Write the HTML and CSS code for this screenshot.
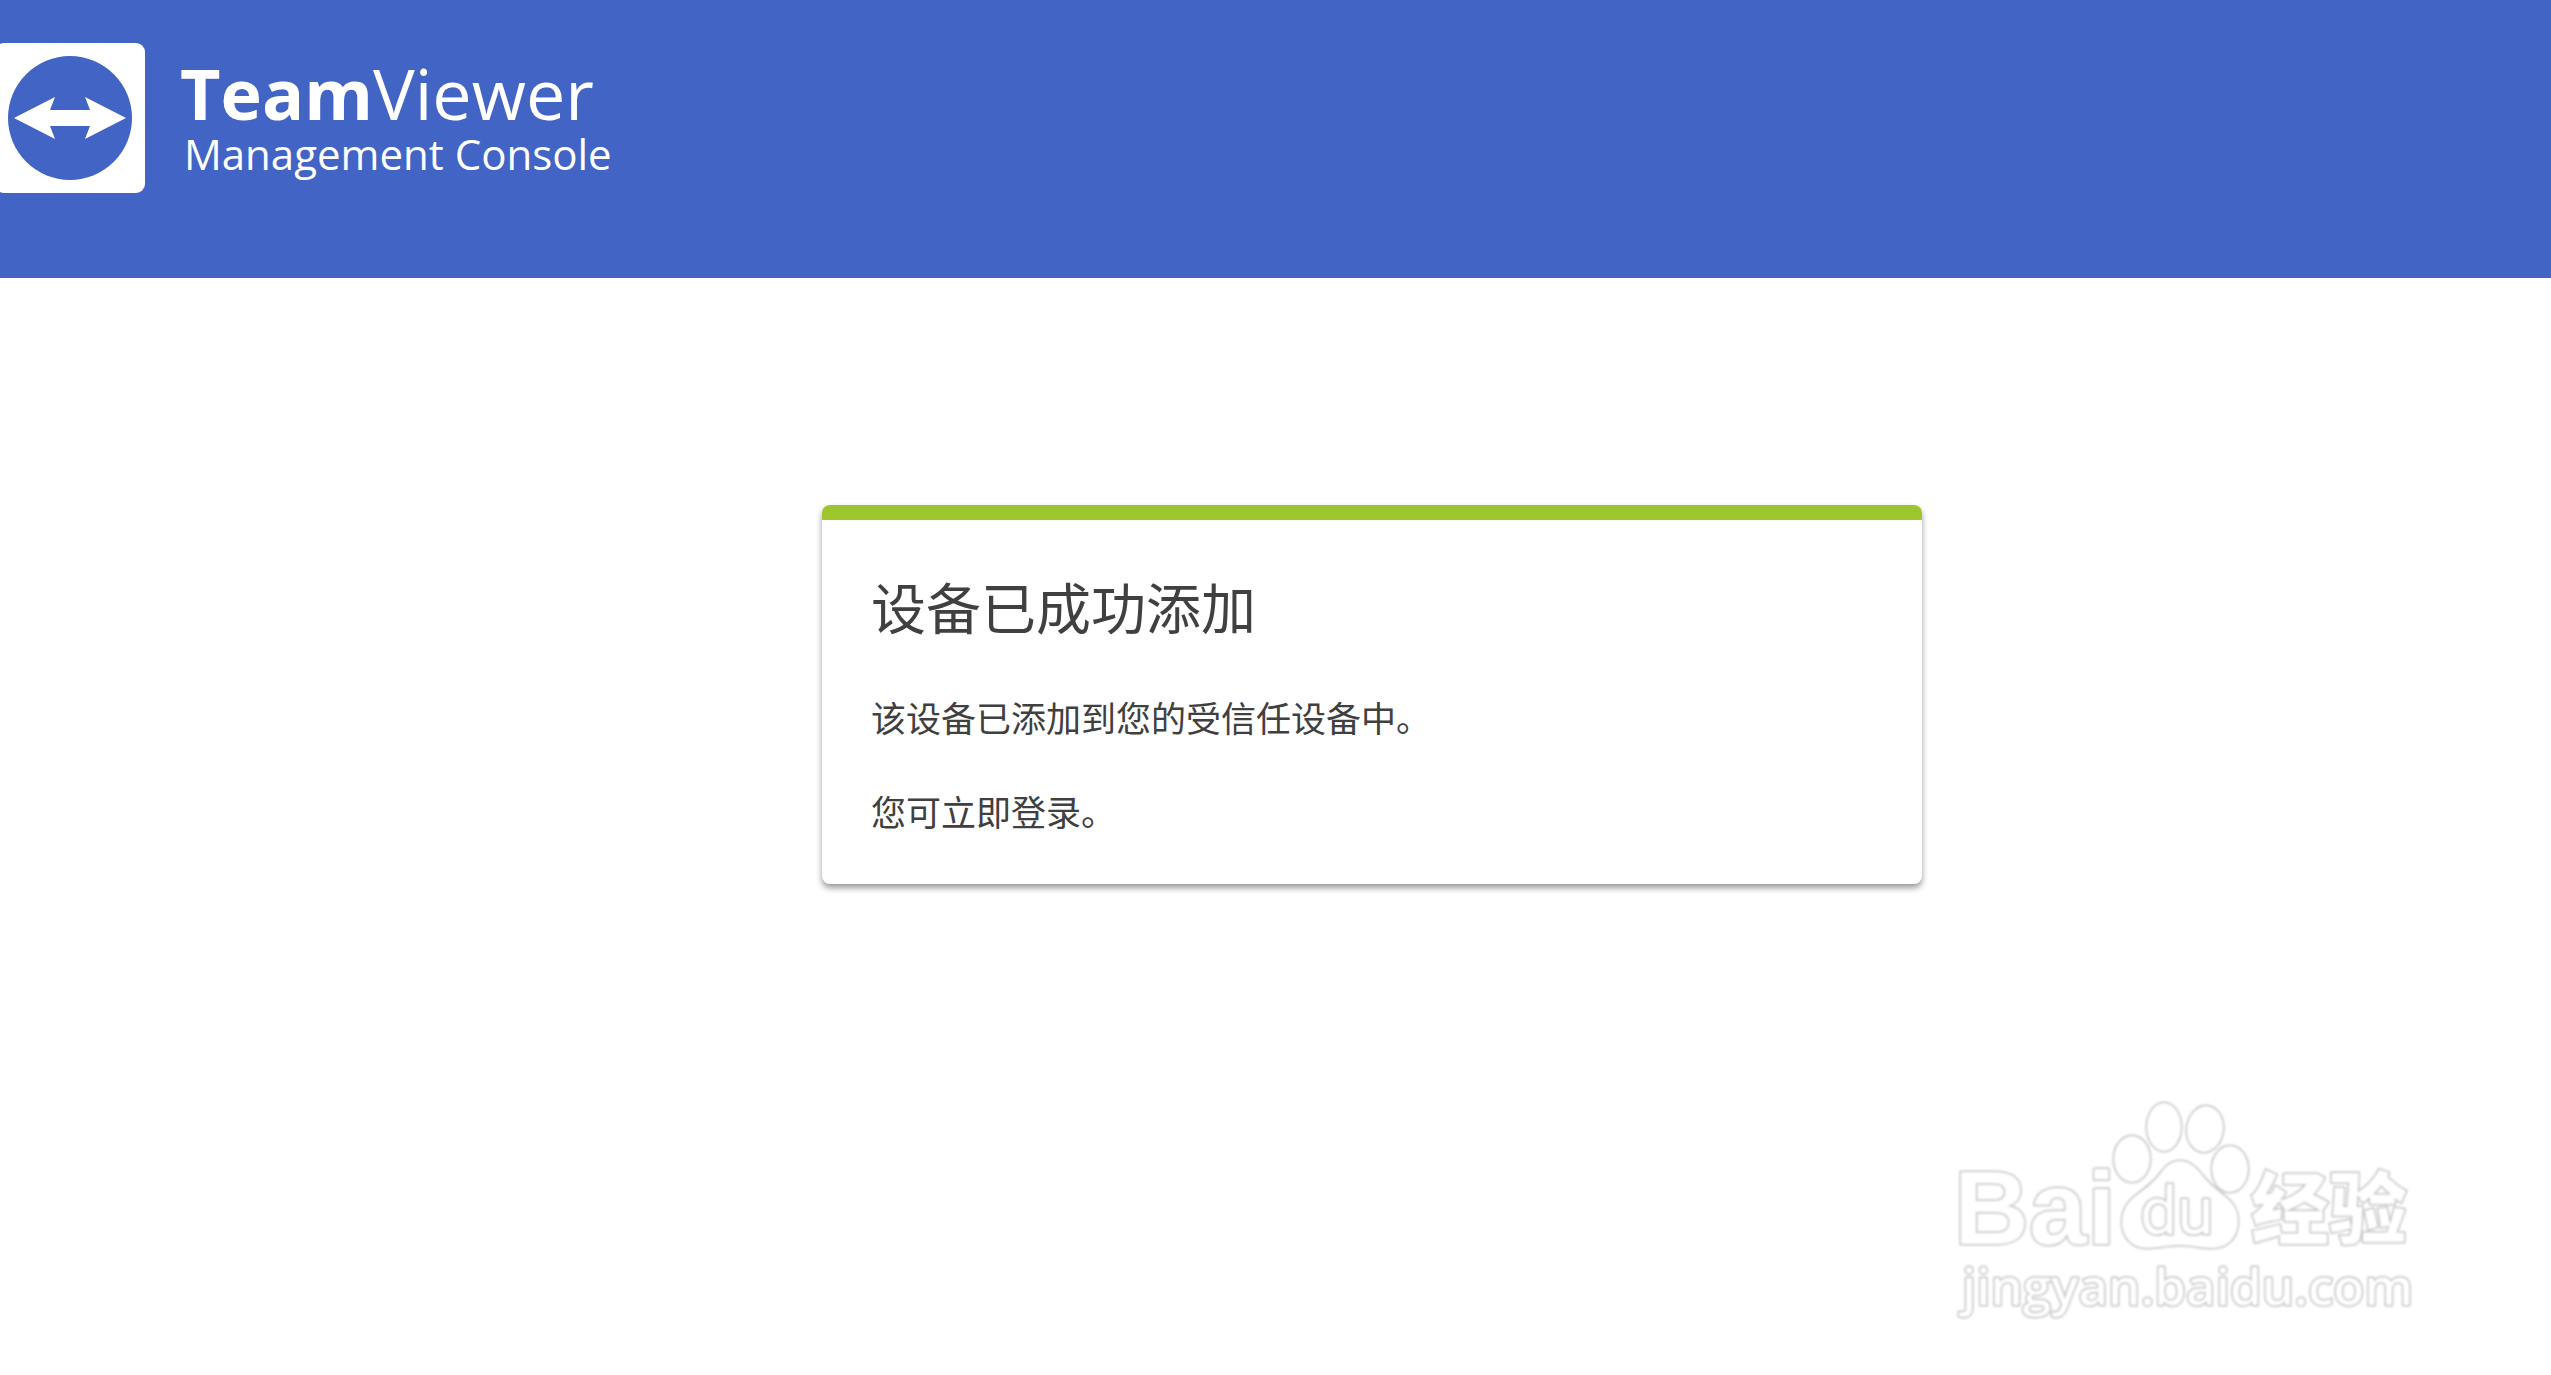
FILE: index.html
```html
<!DOCTYPE html>
<html lang="zh-CN">
<head>
  <meta charset="utf-8">
  <meta name="viewport" content="width=device-width, initial-scale=1">
  <title>TeamViewer Management Console</title>
  <link rel="stylesheet" href="styles.css">
</head>
<body>
  <header class="header">
    <svg class="header-logo" viewBox="5 0 145 150" aria-hidden="true">
      <rect width="150" height="150" rx="9" fill="#fff"/>
      <circle cx="75" cy="75" r="62" fill="#4264c5"/>
      <path d="M19 75 L60 54 L55 67 H95 L90 54 L131 75 L90 96 L95 83 H55 L60 96 Z" fill="#fff"/>
    </svg>
    <div class="brand">
      <div class="brand-name"><b>Team</b>Viewer</div>
      <div class="brand-product">Management Console</div>
    </div>
  </header>

  <main class="main">
    <section class="card">
      <h1 class="card-title">设备已成功添加</h1>
      <p class="card-text">该设备已添加到您的受信任设备中。</p>
      <p class="card-text">您可立即登录。</p>
    </section>
  </main>

  <footer class="footer">
    <svg class="watermark" viewBox="0 0 500 250" role="img" aria-label="Baidu 经验 jingyan.baidu.com">
      <g class="outline">
        <text class="mark-latin" x="24" y="164">Bai</text>
        <ellipse cx="202" cy="79" rx="18" ry="23"/>
        <ellipse cx="234" cy="47" rx="17" ry="24"/>
        <ellipse cx="275" cy="49" rx="18" ry="23" transform="rotate(8 275 49)"/>
        <ellipse cx="300" cy="89" rx="18" ry="23"/>
        <path d="M250 81 C259 81 265 86 272 95 C281 106 287 110 297 118 C305 125 308 132 308 141 C308 158 297 168 282 168 C269 168 263 165 250 165 C237 165 229 168 217 168 C202 168 192 157 192 142 C192 132 196 124 204 117 C216 108 222 104 230 94 C236 86 241 81 250 81 Z"/>
        <text class="mark-du" x="210" y="154">du</text>
        <text class="mark-cjk" x="321" y="158">经验</text>
        <text class="mark-url" x="32" y="225">jingyan.baidu.com</text>
      </g>
    </svg>
  </footer>
</body>
</html>
```

FILE: styles.css
```css
* {
  box-sizing: border-box;
}

body {
  margin: 0;
  min-height: 100vh;
  display: flex;
  flex-direction: column;
  background: #fff;
  color: #404040;
  font-family: "Open Sans", "Noto Sans CJK SC", sans-serif;
}

.header {
  display: flex;
  align-items: flex-start;
  gap: 35px;
  padding: 43px 0 85px;
  background: #4264c5;
  color: #fff;
}

.header-logo {
  flex: none;
  width: 145px;
  height: 150px;
}

.brand {
  padding-top: 8px;
}

.brand-name {
  font-size: 70px;
  line-height: 84px;
}

.brand-product {
  padding-left: 4px;
  font-size: 42px;
  line-height: 38px;
}

.main {
  padding: 227px 0 60px 193px;
}

.card {
  max-width: 1100px;
  margin: 0 auto;
  padding: 48px 49px 44px;
  border-top: 15px solid #9dc62d;
  border-radius: 8px;
  background: #fff;
  box-shadow: 0 4px 6px rgba(0, 0, 0, 0.4);
}

.card-title {
  margin: 0 0 44px;
  font-size: 55px;
  font-weight: 400;
  line-height: 80px;
}

.card-text {
  margin: 0;
  font-size: 35px;
  line-height: 54px;
}

.card-text + .card-text {
  margin-top: 40px;
}

.footer {
  display: flex;
  justify-content: flex-end;
  margin-top: auto;
  padding: 0 121px 45px 0;
}

.watermark {
  width: 500px;
  height: 250px;
}

.outline {
  fill: #fff;
  stroke: #c4c4c4;
  stroke-width: 3px;
  stroke-linejoin: round;
  paint-order: stroke;
  filter: blur(1px);
}

.mark-latin {
  font: 700 104px "Liberation Sans", sans-serif;
}

.mark-du {
  font: 400 66px Roboto, sans-serif;
}

.mark-cjk {
  font: 900 78px "Noto Sans CJK SC", sans-serif;
}

.mark-url {
  font: 600 51px "Open Sans", sans-serif;
}
```
